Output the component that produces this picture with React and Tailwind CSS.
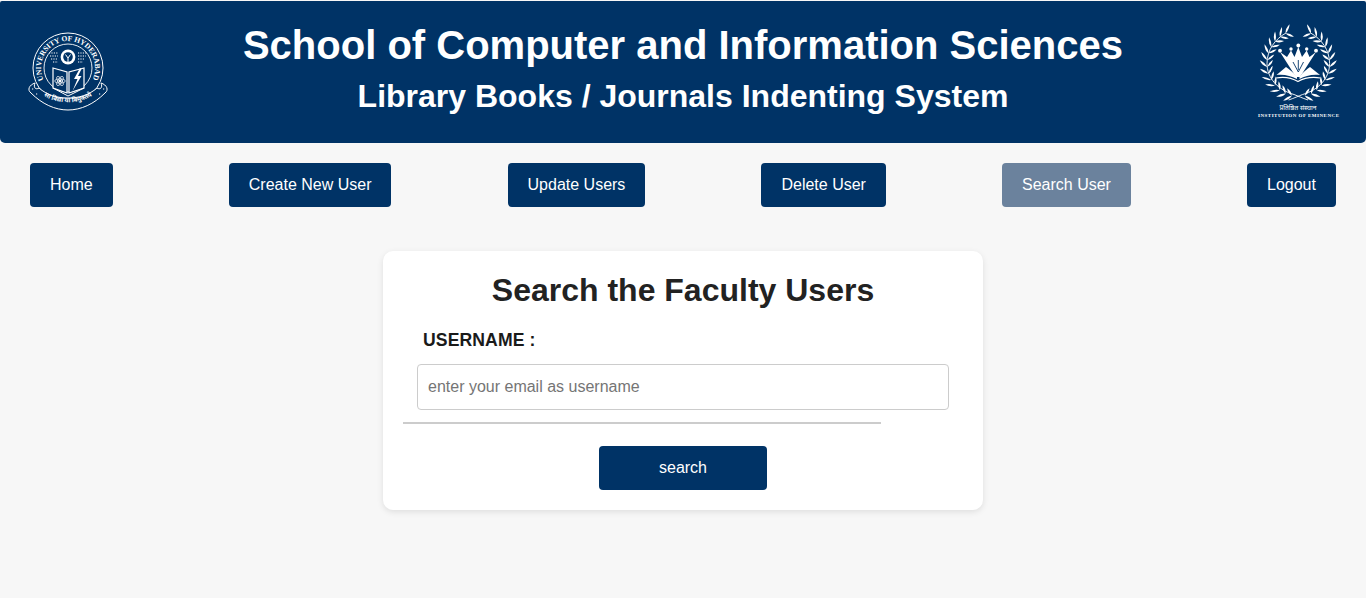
const NAVY = "bg-[#003366]";

function UohLogo() {
  return (
    <svg width="84" height="86" viewBox="-1 0 84 86" className="block" fill="none">
      <defs>
        <path id="uohArc" d="M 16.7 51.8 A 27 27 0 1 1 58.4 60.7" />
        <path id="uohRibbon" d="M 12 63 C 24 78 58 78 70 63" />
      </defs>
      <circle cx="41" cy="40" r="35" stroke="#fff" strokeWidth="1" />
      <circle cx="41" cy="40" r="24" stroke="#fff" strokeWidth="0.9" />
      <text fontFamily="'Liberation Serif', serif" fontSize="7.6" fontWeight="700" fill="#fff" textLength="108" lengthAdjust="spacing">
        <textPath href="#uohArc">UNIVERSITY OF HYDERABAD</textPath>
      </text>
      <circle cx="41" cy="29" r="7.4" fill="#fff" />
      <circle cx="41" cy="29" r="4.8" fill="#003366" />
      <path d="M41 34V30M38.5 26.5L41 30L43.5 26.5" stroke="#fff" strokeWidth="1" />
      <path d="M22 25h9M23 28h8M24 31h7M26 34h5M51 25h9M51 28h8M51 31h7M51 34h5" stroke="#fff" strokeWidth="1.2" strokeDasharray="1.2 1.2" />
      <path d="M8 55C2 57 0 62 4 65C15 76 28 82 41 82C54 82 67 76 78 65C82 62 80 57 74 55C76 60 73 62 70 60C62 67 52 70 41 70C30 70 20 67 12 60C9 62 6 60 8 55Z" stroke="#fff" strokeWidth="1" fill="#003366" />
      <path d="M26 40L40 44V65L26 60Z" stroke="#fff" strokeWidth="1.2" fill="#003366" />
      <path d="M57 40L42 44V65L57 60Z" stroke="#fff" strokeWidth="1.2" fill="#003366" />
      <path d="M26 60L41 68L57 60" stroke="#fff" strokeWidth="1" />
      <path d="M53 40L47 51H50.5L45.5 63L54.5 48H51L54.5 41Z" fill="#fff" />
      <circle cx="33" cy="53" r="1.4" fill="#fff" />
      <ellipse cx="33" cy="53" rx="5.2" ry="2.1" stroke="#fff" strokeWidth="0.7" />
      <ellipse cx="33" cy="53" rx="5.2" ry="2.1" stroke="#fff" strokeWidth="0.7" transform="rotate(60 33 53)" />
      <ellipse cx="33" cy="53" rx="5.2" ry="2.1" stroke="#fff" strokeWidth="0.7" transform="rotate(-60 33 53)" />
      <path d="M5 61h1.2M9 66h1.2M72 66h1.2M76 61h1.2" stroke="#fff" strokeWidth="1.2" />
      <text fontFamily="'Noto Sans', 'DejaVu Sans', sans-serif" fontSize="6.3" fontWeight="700" fill="#fff" textAnchor="middle">
        <textPath href="#uohRibbon" startOffset="50%">सा विद्या या विमुक्तये</textPath>
      </text>
    </svg>
  );
}

const TS = [12, 24, 36, 48, 60, 72, 84, 96, 108, 120, 132, 144, 156];

function Laurel({ flip }) {
  const cx = 42.3;
  const cy = 39.5;
  return (
    <g transform={flip ? "translate(84.6 0) scale(-1 1)" : undefined}>
      <path d="M52 76C46 74 42 72 38 70.5C22 66 11 54 11 39.5C11 26 19 15 30 9" stroke="#fff" strokeWidth="0.9" />
      {TS.map((t) => {
        const a = (t * Math.PI) / 180;
        const x = cx - 31.3 * Math.sin(a);
        const y = cy + 33 * Math.cos(a);
        const ang = (Math.atan2(-Math.sin(a), -Math.cos(a)) * 180) / Math.PI;
        return (
          <g key={t}>
            <path d="M0 0Q4.5 -2.4 10 0Q4.5 1.8 0 0Z" fill="#fff" transform={`translate(${x} ${y}) rotate(${ang - 42})`} />
            <path d="M0 0Q4.5 -1.8 9 0Q4.5 2.4 0 0Z" fill="#fff" transform={`translate(${x} ${y}) rotate(${ang + 46})`} />
          </g>
        );
      })}
    </g>
  );
}

function IoeLogo() {
  return (
    <svg width="85" height="96" viewBox="0 0 85 96" className="block" fill="none">
      <Laurel />
      <Laurel flip />
      <circle cx="42.3" cy="21.5" r="1.9" fill="#fff" />
      <circle cx="35" cy="25" r="1.7" fill="#fff" />
      <circle cx="50.7" cy="25" r="1.7" fill="#fff" />
      <circle cx="24" cy="26.7" r="1.9" fill="#fff" />
      <circle cx="60" cy="26.7" r="1.9" fill="#fff" />
      <path d="M24 28L31 33L35 26.5L38.5 33L42.3 23L46 33L50.7 26.5L53.5 33L60 28L44 53H40Z" fill="#fff" />
      <path d="M42.3 36V46" stroke="#003366" strokeWidth="0.9" />
      <path d="M37 38L42.3 48L47.5 38" stroke="#003366" strokeWidth="0.9" />
      <path d="M41 53C37 48 33 45 30 43L20.5 51C28 50 35 52 41 55Z" fill="#fff" />
      <path d="M43.5 53C47 48 51 45 54 43L64 51C56 50 49 52 43.5 55Z" fill="#fff" />
      <path d="M20 54C28 52.5 36 54 42 57.5C48 54 56 52.5 64.5 54" stroke="#fff" strokeWidth="1.2" />
      <text x="42" y="86" textAnchor="middle" fontFamily="'Noto Sans', 'DejaVu Sans', serif" fontSize="6.6" fill="#fff">प्रतिष्ठित संस्थान</text>
      <text x="42.5" y="93" textAnchor="middle" fontFamily="'Liberation Serif', serif" fontWeight="700" fontSize="5" textLength="81" lengthAdjust="spacing" fill="#fff">INSTITUTION OF EMINENCE</text>
    </svg>
  );
}

function NavButton({ children, active }) {
  return (
    <button className={`h-[44px] px-5 rounded-[4px] text-white text-base ${active ? "bg-[#6b829d]" : NAVY}`}>
      {children}
    </button>
  );
}

export default function App() {
  return (
    <div className="min-h-[598px] bg-[#f7f7f7] pt-px font-['Liberation_Sans',Arial,sans-serif]">
      <header className={`${NAVY} h-[142px] rounded-b-[5px] rounded-t-[2px] flex items-center justify-between pl-[26px] pr-[25px] text-white`}>
        <div className="-mt-[2px]"><UohLogo /></div>
        <div className="text-center -mt-[8px]">
          <h1 className="text-[40px] leading-[46px] font-bold">School of Computer and Information Sciences</h1>
          <h2 className="text-[32px] leading-[37px] font-bold mt-[10px]">Library Books / Journals Indenting System</h2>
        </div>
        <div><IoeLogo /></div>
      </header>
      <nav className="flex justify-between px-[30px] mt-[20px]">
        <NavButton>Home</NavButton>
        <NavButton>Create New User</NavButton>
        <NavButton>Update Users</NavButton>
        <NavButton>Delete User</NavButton>
        <NavButton active>Search User</NavButton>
        <NavButton>Logout</NavButton>
      </nav>
      <main className="mt-[44px] mx-auto w-[600px] h-[259px] bg-white rounded-[10px] shadow-[0_2px_6px_rgba(0,0,0,0.1)] px-[20px] pt-[21px]">
        <h2 className="text-[32px] leading-[37px] font-bold text-center text-[#222222]">Search the Faculty Users</h2>
        <label className="block mt-[21px] ml-[20px] font-bold text-[#1a1a1a] text-[17.6px] leading-[20px] tracking-[0.1px]">USERNAME :</label>
        <input
          className="block mt-[14px] mx-[14px] w-[532px] h-[46px] px-[10px] border border-[#cccccc] rounded-[4px] text-base placeholder:text-[#757575]"
          placeholder="enter your email as username"
        />
        <hr className="mt-[12px] w-[478px] border-0 border-t-2 border-[#cccccc]" />
        <div className="flex justify-center mt-[22px]">
          <button className={`${NAVY} w-[168px] h-[44px] rounded-[4px] text-white text-base`}>search</button>
        </div>
      </main>
    </div>
  );
}
